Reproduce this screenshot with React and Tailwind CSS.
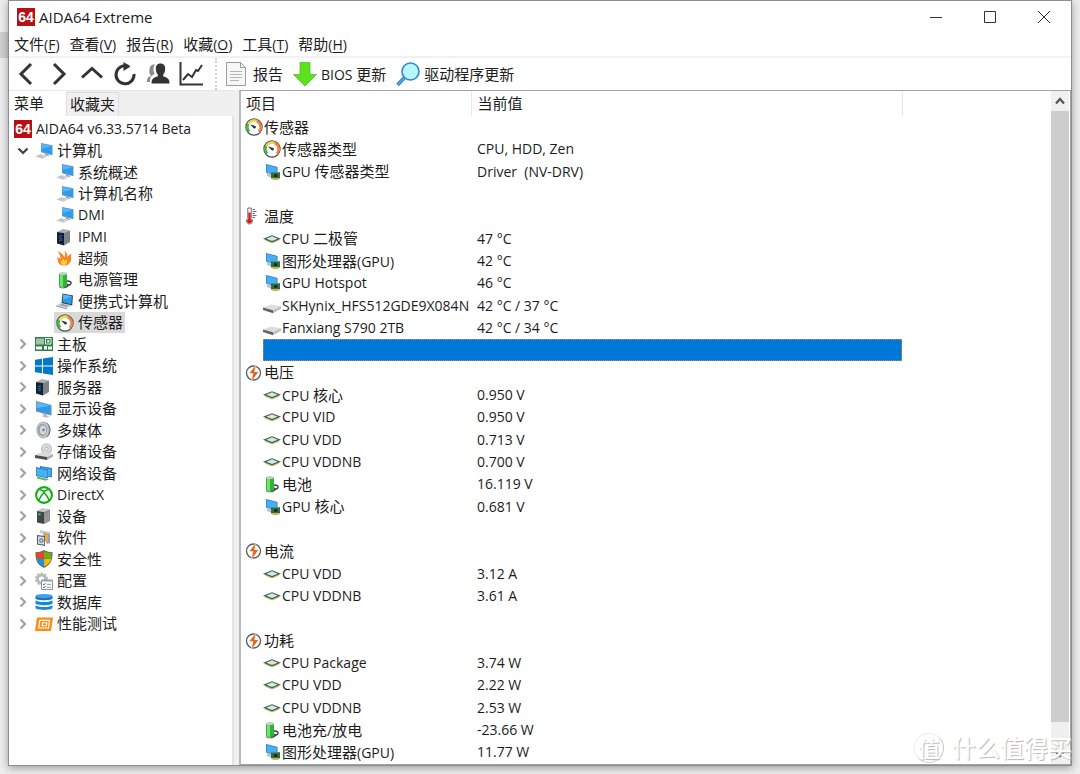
import React from 'react';
import clsx from 'clsx';

/* ---------- icons (all on an 18px grid) ---------- */

const Svg = ({ children, className = "w-[18px] h-[18px]" }) => (
  <svg viewBox="0 0 18 18" fill="none" className={clsx("block shrink-0", className)} aria-hidden="true">
    {children}
  </svg>
);

const Logo = () => (
  <span className="flex w-[18px] h-[18px] shrink-0 items-center justify-center bg-[#b80f12] text-[14px] leading-[18px] font-bold text-white font-['Liberation_Sans',sans-serif]">
    64
  </span>
);

const Computer = () => (
  <Svg>
    <path d="M0 14.500L5.500 12l7 2.300L7.500 17z" fill="#ccd3d8" />
    <path d="M2.500 14.500l3.500-1.500M5 15.300l3.500-1.600" stroke="#a3abb1" strokeWidth=".6" />
    <path d="M9 11l4.500 1.500 1 1.500-4-.5z" fill="#9aa2a8" />
    <path d="M6 1l11.500 2.300v10L6 10.200z" fill="#7a97ad" />
    <path d="M6.600 1.800L17 4v8.400L6.600 9.600z" fill="#2e9bee" />
    <path d="M6.600 1.800L17 4 6.600 7z" fill="#55b5f8" />
  </Svg>
);

const Laptop = () => (
  <Svg>
    <path d="M0 13.500l5-3 11 3-5 3z" fill="#d5dadd" />
    <path d="M0 13.500l11 3v1L0 14.500z" fill="#8d949a" />
    <path d="M3 13.200l3-1.500 7 2-2.500 1.400z" fill="#9ba3aa" />
    <path d="M6.500 1.500L17 3.500l-.8 10L5.500 11z" fill="#34434f" />
    <path d="M7.300 2.500l8.700 1.800-.7 8L6.500 10z" fill="#2d9bee" />
    <path d="M7.300 2.500l8.700 1.800L7 7.500z" fill="#5cb8f8" />
  </Svg>
);

const Server = () => (
  <Svg>
    <path d="M1 4l6-3 7 1.500L8 5z" fill="#a9afb4" />
    <path d="M8 5l6-2.500V14l-6 3.500z" fill="#7b8288" />
    <path d="M1 4l7 1v12.500L1 15.500z" fill="#17202a" />
    <path d="M3 8.500l3-1M3 10.500l3-.5M3 12.800l3-1" stroke="#1673d1" strokeWidth="1.100" />
  </Svg>
);

const Device = () => (
  <Svg>
    <path d="M2 4l5-3 8 1.200L9.500 5z" fill="#c5c7c9" />
    <path d="M9 5l6-2.800V14l-6 3z" fill="#8b8d8f" />
    <path d="M2 4l7 1v12l-7-1.500z" fill="#434547" />
    <path d="M3.500 6.300h2v2h-2z" fill="#35d84a" />
    <path d="M10.500 7v8M12 6.300v8M13.500 5.600v7.800" stroke="#a9abad" strokeWidth=".6" />
  </Svg>
);

const Flame = () => (
  <Svg>
    <path d="M.5 8.500c2 0 3 .5 4 1.500C4.500 7 3.500 4.500 1.500 2 5 3.500 7.500 5.500 8.500 8.500 9 6.500 9.200 4.500 8.500 1.500c2.500 2 3.200 5 3 7 .7-2 2-3.200 4.200-3.800-1.200 2-.4 3.800-.7 6-.5 3.500-3.200 5.800-6.700 5.800-4 0-6.300-2-6.300-4.500 0-1.500-.5-2.500-1.500-3.500z" fill="#f6861f" />
    <path d="M5 12c1 0 1.500-.5 2-2.500C8 11 8.500 11.500 9 12c1-.3 1.500-1 2-2 .5 3.500-.5 6-3 6-2 0-3.500-1.500-3-4z" fill="#ffd23c" />
  </Svg>
);

const Battery = () => (
  <Svg>
    <path d="M11 10c3 0 4.500 1 4 2.500-.8 2-3.500 2.500-8 3" stroke="#3c3f42" strokeWidth="1.500" />
    <path d="M9 12l4 1-1 3-4 1z" fill="#4a4d50" />
    <path d="M3 2.500v12c0 2 8 2 8 0v-12z" fill="#2cb536" />
    <path d="M4 3v12c1 .6 2 .7 3 .7V3z" fill="#72e368" />
    <ellipse cx="7" cy="2.500" rx="4" ry="1.500" fill="#c4ccc5" />
    <path d="M3 15c0 2 8 2 8 0v.8c0 2-8 2-8 0z" fill="#31533a" />
  </Svg>
);

const Gauge = () => (
  <Svg>
    <circle cx="9" cy="9" r="8.100" fill="#fff" stroke="#4a4f53" strokeWidth="1.200" />
    <path d="M4.300 13.700A6.500 6.500 0 0 1 3.300 6" stroke="#45b840" strokeWidth="2.600" />
    <path d="M3.300 6a6.500 6.500 0 0 1 8.300-3" stroke="#ecd53f" strokeWidth="2.600" />
    <path d="M11.600 3a6.500 6.500 0 0 1 2.100 10.700" stroke="#f08344" strokeWidth="2.600" />
    <path d="M5 6.500l4.700 1.200a1.400 1.400 0 1 1-1.500 2z" fill="#2f3437" />
  </Svg>
);

const Board = () => (
  <Svg>
    <path d="M0 2h18v14H0z" fill="#2f7f49" />
    <path d="M2 3.500v6M4 3.500v6M6 3.500v6M8 3.500v6" stroke="#fff" strokeWidth="1.100" />
    <path d="M10.500 3.500h5.500v5.500h-5.500z" stroke="#fff" strokeWidth=".9" />
    <path d="M12.200 5.200h2.200v2.200h-2.200zM1 11.500h6v3H1zM9 11h3v3.500H9zM13 11.500h4v3h-4z" fill="#fff" />
  </Svg>
);

const WindowsLogo = () => (
  <Svg>
    <path d="M0 2.800l7-1v6.700H0zM8 1.600L18 0v8.500H8zM0 9.500h7v6.700l-7-1zM8 9.500h10V18l-10-1.600z" fill="#0078d0" />
  </Svg>
);

const Monitor = () => (
  <Svg>
    <path d="M7 13.500l5 1v1.500l3 .3-4 1.500-4-1.500 1.500-.5z" fill="#b4babf" />
    <path d="M1 1l15.500 4v10.500L1 11.500z" fill="#7b8a96" />
    <path d="M1.700 2L15.800 5.700v8.700L1.700 10.700z" fill="#2c9aee" />
    <path d="M1.700 2l14.100 3.700L1.700 8z" fill="#5db9f7" />
  </Svg>
);

const Speaker = () => (
  <Svg>
    <ellipse cx="10" cy="9" rx="5.500" ry="7.500" fill="#55595c" />
    <ellipse cx="8" cy="9" rx="6.300" ry="8" fill="#c9ccce" stroke="#9da1a4" strokeWidth=".7" />
    <ellipse cx="7.500" cy="9" rx="4.700" ry="6.200" fill="#9ba0a4" />
    <ellipse cx="8" cy="9" rx="3.200" ry="4.500" fill="#d0dae0" />
    <circle cx="8.500" cy="9" r="1.400" fill="#7f8b92" />
  </Svg>
);

const Storage = () => (
  <Svg>
    <circle cx="11.500" cy="6" r="5.200" fill="#d6dadd" stroke="#a8adb0" strokeWidth=".7" />
    <circle cx="11.500" cy="6" r="1.600" fill="#fff" stroke="#9ba0a4" strokeWidth=".7" />
    <path d="M0 12l5-2.500 13 1.500-6 3z" fill="#d9dcde" />
    <path d="M0 12l12 2v3L0 15z" fill="#4b4e51" />
    <path d="M12 14l6-3v2.500L12 17z" fill="#a5a9ac" />
  </Svg>
);

const Network = () => (
  <Svg>
    <path d="M5 2l12 2v9.500L5 11z" fill="#2678b8" />
    <path d="M6 3l10.300 2v7.500L6 10.500z" fill="#46a9f1" />
    <path d="M1 3l12 2.500v9L1 12z" fill="#2c80bd" />
    <path d="M1.700 4.200l10.600 2.200v7L1.700 11.200z" fill="#48b0f7" />
    <path d="M2 12.500l8 2v2l-8-2z" fill="#4cc04b" />
    <path d="M10 14.500l4 .5-4 2z" fill="#8b9296" />
  </Svg>
);

const Xbox = () => (
  <Svg>
    <circle cx="9" cy="9" r="7.900" stroke="#12ae12" strokeWidth="2.100" />
    <path d="M4.500 3.500C7 4 8.300 5 9 5.700c.7-.7 2-1.700 4.500-2.200M3.800 14.500C5 11.500 7 8.500 9 6.500c2 2 4 5 5.200 8" stroke="#12ae12" strokeWidth="1.700" />
  </Svg>
);

const Software = () => (
  <Svg>
    <path d="M5 1l10 2v3L5 4z" fill="#c9ccce" />
    <path d="M8 3.500l7 1.500v9l-3 1z" fill="#9da1a4" />
    <path d="M8 5.500h5v7H8z" fill="#f3a447" />
    <path d="M2 6l8 1v10l-8-1.500z" fill="#4d5965" />
    <path d="M3 7.200l6.200.8v7.800L3 14.700z" fill="#d3dde4" />
    <circle cx="6.300" cy="11.500" r="2.300" fill="#738799" />
    <circle cx="6.300" cy="11.500" r=".8" fill="#fff" />
  </Svg>
);

const Shield = () => (
  <Svg>
    <path d="M9 0c3 1.700 5.500 2 8.500 2 .5 8-2 13-8.500 16C2.500 15 0 10 .5 2 3.500 2 6 1.700 9 0z" fill="#66706f" />
    <path d="M8.900 1.300v7.500H1.800C1.500 6.500 1.400 5 1.500 3c3 0 5.200-.5 7.400-1.700z" fill="#e8471c" />
    <path d="M9.100 1.300c2.200 1.200 4.400 1.700 7.400 1.700.1 2 0 3.500-.3 5.800H9.100z" fill="#6fae0c" />
    <path d="M1.800 9h7.100v7.600C4.900 14.600 2.600 12.300 1.800 9z" fill="#1294e4" />
    <path d="M9.100 9h7.100c-.8 3.300-3.100 5.600-7.100 7.600z" fill="#fbb901" />
  </Svg>
);

const Config = () => (
  <Svg>
    <circle cx="6.500" cy="7" r="4" stroke="#b5bcc1" strokeWidth="3" />
    <circle cx="6.500" cy="7" r="5.800" stroke="#b5bcc1" strokeWidth="1.600" strokeDasharray="2 1.700" />
    <path d="M6.500 8h11v9.500h-11z" fill="#fff" stroke="#8b949a" />
    <path d="M6 8h12v1.500H6z" fill="#99a3aa" />
    <path d="M8 12l1 1 1.500-2M8 15l1 1 1.500-2" stroke="#2588da" />
    <path d="M12 12.300h4M12 15.300h4" stroke="#8b949a" />
  </Svg>
);

const Database = () => (
  <Svg>
    <path d="M.5 3v2.500c0 2.300 17 2.300 17 0V3z" fill="#1577c4" />
    <ellipse cx="9" cy="3" rx="8.500" ry="2" fill="#3fa1e6" />
    <path d="M.5 7.200c2 2.400 15 2.400 17 0v3.300c-1 2.300-16 2.300-17 0zM.5 12.200c2 2.400 15 2.400 17 0v2.800c-1 2.500-16 2.500-17 0z" fill="#1c86d6" />
  </Svg>
);

const Benchmark = () => (
  <Svg>
    <path d="M2 2.500h16L16 16H0z" fill="#fb8c10" />
    <path d="M4.800 5.300h9.700l-1 7.700H3.700z" stroke="#fff" strokeWidth="1.200" />
    <path d="M7.500 7.700h4.300l-.4 3H7z" stroke="#fff" strokeWidth="1.100" />
  </Svg>
);

const Gpu = () => (
  <Svg>
    <path d="M4 10l5 2v3l-5-2z" fill="#bcc3c8" />
    <path d="M3 1l11.500 3v9L3 9.500z" fill="#2277b5" />
    <path d="M3.500 1.700L13.800 4.500v7.700L3.500 9.200z" fill="#49adf5" />
    <path d="M8 9h9v6.500H8z" fill="#2f6e4a" />
    <path d="M8 9h9v1H8z" fill="#4f8f69" />
    <path d="M11 11.200h3.300v2.800H11z" fill="#172d20" />
    <path d="M9.500 15.500h6v1.500h-6z" fill="#f0ac25" />
  </Svg>
);

const Cpu = () => (
  <Svg>
    <path d="M2 9.800l7 2.700 7-2.700v1l-7 2.600-7-2.600z" fill="#e3bd6c" />
    <path d="M0 8.700l9-3.500 9 3.500-9 3.700z" fill="#35664b" />
    <path d="M3.300 8.700L9 6.300l5.700 2.400L9 10.900z" fill="#dfe3e1" />
  </Svg>
);

const Ssd = () => (
  <Svg>
    <path d="M0 10.500L8 7.500l10 1.800-8 4z" fill="#dbdddf" />
    <path d="M0 10.500l10 2.800v3L0 13z" fill="#606367" />
    <path d="M10 13.300l8-4v2.500l-8 4.500z" fill="#bbbec0" />
  </Svg>
);

const Thermometer = () => (
  <Svg>
    <path d="M2.800 1h3.400v10.500a3 3 0 1 1-3.400 0z" fill="#fff" stroke="#6f3b3b" strokeWidth=".8" />
    <path d="M3.300 5.500h2.400V12a2.300 2.300 0 1 1-2.400 0z" fill="#d5201d" />
    <path d="M7.500 2.500H10M7.500 4.500h4M7.500 6.500H10M7.500 8.500h4M7.500 10.500H10" stroke="#5c6063" strokeWidth=".9" />
  </Svg>
);

const Power = () => (
  <Svg>
    <circle cx="8.500" cy="9" r="7" fill="#fff" stroke="#555b60" strokeWidth="1.300" />
    <path d="M11.500 0L4 9.500h4L6 18l7.800-10.300H9.500z" fill="#de641d" stroke="#fff" strokeWidth=".5" />
  </Svg>
);

const Chevron = ({ open }) => (
  <svg viewBox="0 0 18 18" className="block w-[18px] h-[18px]" fill="none" strokeWidth="2.200" aria-hidden="true">
    {open ? <path d="M4.500 6.500L9 11l4.500-4.500" stroke="#404040" /> : <path d="M6.500 4.500L11 9l-4.500 4.500" stroke="#a3a3a3" />}
  </svg>
);

/* ---------- data ---------- */

const menus = [
  ["文件", "F"], ["查看", "V"], ["报告", "R"], ["收藏", "O"], ["工具", "T"], ["帮助", "H"],
];

const tree = [
  { level: 0, icon: Logo, label: "AIDA64 v6.33.5714 Beta" },
  { level: 1, icon: Computer, label: "计算机", open: true },
  { level: 2, icon: Computer, label: "系统概述" },
  { level: 2, icon: Computer, label: "计算机名称" },
  { level: 2, icon: Computer, label: "DMI" },
  { level: 2, icon: Server, label: "IPMI" },
  { level: 2, icon: Flame, label: "超频" },
  { level: 2, icon: Battery, label: "电源管理" },
  { level: 2, icon: Laptop, label: "便携式计算机" },
  { level: 2, icon: Gauge, label: "传感器", selected: true },
  { level: 1, icon: Board, label: "主板" },
  { level: 1, icon: WindowsLogo, label: "操作系统" },
  { level: 1, icon: Server, label: "服务器" },
  { level: 1, icon: Monitor, label: "显示设备" },
  { level: 1, icon: Speaker, label: "多媒体" },
  { level: 1, icon: Storage, label: "存储设备" },
  { level: 1, icon: Network, label: "网络设备" },
  { level: 1, icon: Xbox, label: "DirectX" },
  { level: 1, icon: Device, label: "设备" },
  { level: 1, icon: Software, label: "软件" },
  { level: 1, icon: Shield, label: "安全性" },
  { level: 1, icon: Config, label: "配置" },
  { level: 1, icon: Database, label: "数据库" },
  { level: 1, icon: Benchmark, label: "性能测试" },
];

const rows = [
  { section: true, icon: Gauge, label: "传感器" },
  { icon: Gauge, label: "传感器类型", value: "CPU, HDD, Zen" },
  { icon: Gpu, label: "GPU 传感器类型", value: "Driver  (NV-DRV)" },
  {},
  { section: true, icon: Thermometer, label: "温度" },
  { icon: Cpu, label: "CPU 二极管", value: "47 °C" },
  { icon: Gpu, label: "图形处理器(GPU)", value: "42 °C" },
  { icon: Gpu, label: "GPU Hotspot", value: "46 °C" },
  { icon: Ssd, label: "SKHynix_HFS512GDE9X084N", value: "42 °C / 37 °C" },
  { icon: Ssd, label: "Fanxiang S790 2TB", value: "42 °C / 34 °C" },
  { selected: true },
  { section: true, icon: Power, label: "电压" },
  { icon: Cpu, label: "CPU 核心", value: "0.950 V" },
  { icon: Cpu, label: "CPU VID", value: "0.950 V" },
  { icon: Cpu, label: "CPU VDD", value: "0.713 V" },
  { icon: Cpu, label: "CPU VDDNB", value: "0.700 V" },
  { icon: Battery, label: "电池", value: "16.119 V" },
  { icon: Gpu, label: "GPU 核心", value: "0.681 V" },
  {},
  { section: true, icon: Power, label: "电流" },
  { icon: Cpu, label: "CPU VDD", value: "3.12 A" },
  { icon: Cpu, label: "CPU VDDNB", value: "3.61 A" },
  {},
  { section: true, icon: Power, label: "功耗" },
  { icon: Cpu, label: "CPU Package", value: "3.74 W" },
  { icon: Cpu, label: "CPU VDD", value: "2.22 W" },
  { icon: Cpu, label: "CPU VDDNB", value: "2.53 W" },
  { icon: Battery, label: "电池充/放电", value: "-23.66 W" },
  { icon: Gpu, label: "图形处理器(GPU)", value: "11.77 W" },
];

/* Chinese runs are set one size up from the latin ones */
const Label = ({ children }) => (
  <span className="whitespace-pre">
    {children.split(/([\u4e00-\u9fff]+)/).filter(Boolean).map((part, i) => (
      <span key={i} className={/[\u4e00-\u9fff]/.test(part) ? "text-[15px]" : "text-[14px]"}>{part}</span>
    ))}
  </span>
);

/* ---------- window parts ---------- */

const TitleBar = () => (
  <header className="flex h-8 items-center pl-2">
    <Logo />
    <h1 className="pl-1 text-[15px]">AIDA64 Extreme</h1>
    <div className="ml-auto flex h-full">
      <button aria-label="最小化" className="flex w-[54px] items-center justify-center">
        <svg width="12" height="12" viewBox="0 0 12 12" stroke="#333"><path d="M0 6.500h12" /></svg>
      </button>
      <button aria-label="最大化" className="flex w-[54px] items-center justify-center">
        <svg width="12" height="12" viewBox="0 0 12 12" fill="none" stroke="#333"><path d="M.5.500h11v11H.500z" /></svg>
      </button>
      <button aria-label="关闭" className="flex w-[54px] items-center justify-center">
        <svg width="12" height="12" viewBox="0 0 12 12" stroke="#333"><path d="M0 0l12 12M12 0L0 12" /></svg>
      </button>
    </div>
  </header>
);

const MenuBar = () => (
  <nav className="flex h-[25px] items-center gap-[10px] border-b-2 border-[#f1f1f1] pl-[5px]">
    {menus.map(([name, key]) => (
      <button key={key} className="whitespace-nowrap">
        <span className="text-[15px]">{name}</span>
        <span className="text-[14px]">(<u className="underline-offset-2">{key}</u>)</span>
      </button>
    ))}
  </nav>
);

const navButtons = [
  ["后退", <path d="M17 2L7 12l10 10" />],
  ["前进", <path d="M7 2l10 10L7 22" />],
  ["向上", <path d="M2 15.500l10-9 10 9" />],
  ["刷新", <><path d="M15.500 4.500A9 9 0 1 0 21 12" /><path d="M10.500 0l7 4.500-7 4.500z" fill="#333" stroke="none" /></>],
  ["用户", (
    <g stroke="none">
      <path d="M1 20c0-4 1-5 4-6-1.500-2-2-4-1.500-7C4 3.500 6 2 9 2.500 7 5 7 8 8.500 12 4.500 14 4 16 4 20z" fill="#8a8a8a" />
      <path d="M14.500 1.500c3.300 0 4.700 2.200 4.700 5.200 0 2.600-.9 4.500-2 5.800v1.700c3.800 1.300 6.300 2 6.300 7.300h-18c0-5.300 2.500-6 6.300-7.300v-1.700c-1.100-1.300-2-3.200-2-5.800 0-3 1.400-5.200 4.700-5.200z" fill="#333" />
    </g>
  )],
  ["图表", <path d="M1.500 0v22.500H24M4 18l5-6 4 3 4-7 2 1 4-6" strokeWidth="2" />],
];

const ToolBar = () => (
  <div className="flex h-8 items-center">
    {navButtons.map(([name, shape]) => (
      <button key={name} aria-label={name} className="flex w-[33px] justify-center">
        <svg viewBox="0 0 24 24" width="24" height="24" fill="none" stroke="#333" strokeWidth="3">{shape}</svg>
      </button>
    ))}
    <div className="mx-2 h-full border-l-2 border-dotted border-[#d2d2d2]" />
    <button className="flex items-center gap-[6px]">
      <svg viewBox="0 0 22 26" width="22" height="26" fill="none">
        <path d="M1.500 1.500h14l5 5v18h-19z" fill="#f7f7f7" stroke="#9c9c9c" />
        <path d="M15.500 1.500v5h5" stroke="#9c9c9c" />
        <path d="M5 10.500h12M5 13.500h12M5 16.500h12M5 19.500h9" stroke="#b5b5b5" />
      </svg>
      <Label>报告</Label>
    </button>
    <button className="ml-[10px] flex items-center gap-1">
      <svg viewBox="0 0 24 24" width="24" height="24">
        <path d="M7 .5h10v12h6.500L12 24 .5 12.500H7z" fill="#5ae21f" stroke="#42b716" strokeWidth=".7" />
      </svg>
      <Label>BIOS 更新</Label>
    </button>
    <button className="ml-[10px] flex items-center gap-1">
      <svg viewBox="0 0 24 24" width="24" height="24" fill="none">
        <path d="M9 15l-7.500 8" stroke="#2d78c8" strokeWidth="3.500" />
        <path d="M9 15l-7.500 8" stroke="#69aeea" strokeWidth="1.300" />
        <circle cx="14.500" cy="9.500" r="8.500" fill="#b5f8ff" stroke="#3a80ce" strokeWidth="1.600" />
      </svg>
      <Label>驱动程序更新</Label>
    </button>
  </div>
);

const TreeItem = ({ item }) => {
  const Icon = item.icon;
  return (
    <li
      role="treeitem"
      aria-level={item.level + 1}
      aria-selected={!!item.selected}
      className={clsx(
        "flex items-center odd:h-[22px] even:h-[21px]",
        item.level === 0 && "pl-[3px]",
        item.level === 1 && "pl-[5px]",
        item.level === 2 && "pl-[45px]"
      )}
    >
      {item.level === 1 && (
        <button aria-label={item.open ? "折叠" : "展开"} className="mr-px">
          <Chevron open={item.open} />
        </button>
      )}
      <span className={clsx("flex h-full items-center gap-1 px-[2px]", item.selected && "bg-[#d9d9d9]")}>
        <Icon />
        <Label>{item.label}</Label>
      </span>
    </li>
  );
};

const Sidebar = () => (
  <aside className="flex w-[230px] shrink-0 flex-col bg-[#f0f0f0] pr-[5px]">
    <div role="tablist" className="flex h-[26px] items-end border-t border-[#e6e6e6]">
      <button role="tab" aria-selected="true" className="h-full w-[57px] bg-white pl-[5px] text-left">
        <Label>菜单</Label>
      </button>
      <button role="tab" aria-selected="false" className="h-6 border-x border-t border-[#dcdcdc] px-[3px]">
        <Label>收藏夹</Label>
      </button>
    </div>
    <ul role="tree" className="flex-1 border-r-2 border-[#e4e4e4] bg-white pt-[2px]">
      {tree.map((item, i) => <TreeItem key={i} item={item} />)}
    </ul>
  </aside>
);

const SensorRow = ({ row }) => {
  const Icon = row.icon;
  if (row.selected) {
    return (
      <tr className="h-[22px] nth-[3n]:h-[23px]">
        <td colSpan={2} className="p-0 pl-[22px]">
          <div className="h-[22px] border border-dotted border-[#c98a4a] bg-[#0078d7]" />
        </td>
        <td className="p-0" />
      </tr>
    );
  }
  return (
    <tr className="h-[22px] nth-[3n]:h-[23px]">
      <td className={clsx("p-0", row.section ? "pl-1" : "pl-[22px]")}>
        {Icon && (
          <div className="flex items-center gap-px">
            <Icon />
            <Label>{row.label}</Label>
          </div>
        )}
      </td>
      <td className="p-0 pl-[6px]">{row.value && <Label>{row.value}</Label>}</td>
      <td className="p-0" />
    </tr>
  );
};

const ScrollBar = () => (
  <div className="flex w-[19px] shrink-0 flex-col border-r border-white bg-[#f0f0f0]">
    <button aria-label="向上滚动" className="flex h-[20px] items-center justify-center">
      <svg viewBox="0 0 10 8" width="10" height="8" fill="none" stroke="#555" strokeWidth="2.200"><path d="M1 6.500l4-4.500 4 4.500" /></svg>
    </button>
    <div className="flex-1 bg-[#cdcdcd]" />
    <div className="h-[22px]" />
    <button aria-label="向下滚动" className="flex h-[20px] items-center justify-center">
      <svg viewBox="0 0 10 8" width="10" height="8" fill="none" stroke="#444" strokeWidth="2.200"><path d="M1 1.500L5 6l4-4.500" /></svg>
    </button>
  </div>
);

const SensorPanel = () => (
  <main className="flex min-w-0 flex-1 border border-l-2 border-[#a0a2a8] border-l-[#b9bac0] bg-white">
    <div className="min-w-0 flex-1 overflow-hidden">
      <table className="w-full table-fixed border-collapse text-left">
        <colgroup>
          <col className="w-[230px]" />
          <col className="w-[431px]" />
          <col />
        </colgroup>
        <thead>
          <tr className="h-[25px]">
            <th className="border-r border-[#e6e6e6] p-0 pl-[5px] font-normal"><Label>项目</Label></th>
            <th className="border-r border-[#e6e6e6] p-0 pl-[6px] font-normal"><Label>当前值</Label></th>
            <th className="p-0" />
          </tr>
        </thead>
        <tbody>
          {rows.map((row, i) => <SensorRow key={i} row={row} />)}
        </tbody>
      </table>
    </div>
    <ScrollBar />
  </main>
);

const Watermark = () => (
  <div className="pointer-events-none absolute right-[8px] bottom-[9px] flex items-center gap-2 whitespace-nowrap font-medium text-white [text-shadow:1px_1px_1px_#b8b8b8]">
    <span className="flex h-[30px] w-[30px] items-center justify-center rounded-full border border-[#ececec] border-r-[#c8c8c8] border-b-[#c8c8c8] text-[22px] leading-[28px]">值</span>
    <span className="text-[24px] leading-[34px]">什么值得买</span>
  </div>
);

const App = () => (
  <div className="relative flex min-h-screen bg-[#ededed] px-2 pb-2 text-[14px] leading-[20px] text-[#1c1c1c] font-['Open_Sans','Noto_Sans_CJK_SC',sans-serif]">
    <div className="absolute top-8 left-0 h-[26px] w-2 bg-[#cfcfcf]" />
    <div className="relative flex min-w-0 flex-1 flex-col border border-[#8e8e8e] bg-white shadow-[0_2px_8px_rgba(0,0,0,0.35)]">
      <TitleBar />
      <MenuBar />
      <ToolBar />
      <div className="flex flex-1">
        <Sidebar />
        <SensorPanel />
      </div>
    </div>
    <Watermark />
  </div>
);

export default App;
